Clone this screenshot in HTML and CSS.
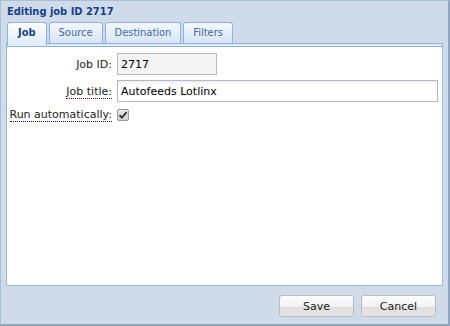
FILE: index.html
```html
<!DOCTYPE html>
<html lang="en">
<head>
  <meta charset="UTF-8" />
  <title>Editing job ID 2717</title>
  <link rel="stylesheet" href="styles.css">
</head>
<body>

  <div class="window">
    <div class="window-title">Editing job ID 2717</div>

    <div class="tab-panel">
      <div class="tab-bar">
        <div class="tab active">Job</div>
        <div class="tab">Source</div>
        <div class="tab">Destination</div>
        <div class="tab">Filters</div>
      </div>
      <div class="tab-strip"></div>

      <div class="tab-body">
        <div class="form-row">
          <label class="field-label">Job ID:</label>
          <input type="text" class="field readonly short" value="2717" readonly />
        </div>
        <div class="form-row">
          <label class="field-label"><span class="hint red">Job title:</span></label>
          <input type="text" class="field wide" value="Autofeeds Lotlinx" />
        </div>
        <div class="form-row check-row">
          <label class="field-label"><span class="hint blue">Run automatically:</span></label>
          <span class="checkbox">
            <svg width="12" height="12" viewBox="0 0 12 12">
              <path d="M2.5 6.2 L4.8 8.6 L9.6 3.2" fill="none" stroke="#333" stroke-width="1.8" />
            </svg>
          </span>
        </div>
      </div>
    </div>

    <div class="window-buttons">
      <button class="btn">Save</button>
      <button class="btn">Cancel</button>
    </div>
  </div>

</body>
</html>
```

FILE: styles.css
```css
body {
  margin: 0;
  font-family: "DejaVu Sans", Verdana, sans-serif;
}

.window {
  width: 450px;
  height: 326px;
  box-sizing: border-box;
  background: #cfdbe8;
  border: 1px solid #a9bfd6;
  border-right: 2px solid #8fa5c0;
  border-bottom: 2px solid #8fa5c0;
  display: flex;
  flex-direction: column;
}

.window-title {
  color: #15428b;
  font-family: "DejaVu Sans Condensed", "DejaVu Sans", sans-serif;
  font-stretch: condensed;
  font-weight: bold;
  font-size: 11px;
  padding: 4px 0 0 6px;
  height: 17px;
}

.tab-panel {
  margin: 0 5px 0 5px;
  display: flex;
  flex-direction: column;
}

.tab-bar {
  display: flex;
  gap: 2px;
  padding-left: 1px;
  height: 21px;
}

.tab {
  border: 1px solid #8db2e3;
  border-bottom: none;
  border-radius: 3px 3px 0 0;
  background: linear-gradient(#f3f8fe, #d7e5f7);
  color: #416aa3;
  font-family: "DejaVu Sans Condensed", "DejaVu Sans", sans-serif;
  font-stretch: condensed;
  font-size: 11px;
  line-height: 20px;
  padding: 0 9px;
}

.tab.active {
  background: linear-gradient(#ffffff, #deecfd);
  color: #15428b;
  font-weight: bold;
  padding: 0 10px;
  height: 22px;
  position: relative;
  z-index: 1;
}

.tab-strip {
  height: 2px;
  background: #deecfd;
  border: 1px solid #8db2e3;
}

.tab-body {
  background: #fff;
  border: 1px solid #99bbe8;
  border-top: none;
  height: 239px;
  padding-top: 6px;
  box-sizing: border-box;
}

.form-row {
  display: flex;
  align-items: center;
  margin-bottom: 5px;
}

.field-label {
  width: 105px;
  padding-right: 5px;
  text-align: right;
  font-size: 11px;
  color: #222;
}

.hint {
  border-bottom: 1px dotted;
}

.hint.red {
  border-color: #8b0000;
}

.hint.blue {
  border-color: #0000cc;
}

.field {
  height: 22px;
  box-sizing: border-box;
  border: 1px solid #b5b8c8;
  font-family: "DejaVu Sans", Verdana, sans-serif;
  font-size: 11px;
  padding: 0 3px;
  color: #000;
  outline: none;
}

.field.readonly {
  background: #f4f4f4;
}

.field.short {
  width: 100px;
}

.field.wide {
  width: 321px;
  background: linear-gradient(#eeeeee, #ffffff 4px);
}

.check-row {
  margin-top: 2px;
}

.checkbox {
  width: 12px;
  height: 12px;
  margin-top: 2px;
  box-sizing: border-box;
  border: 1px solid #9a9a9a;
  border-radius: 2px;
  background: linear-gradient(#e6e6e6, #d0d0d0);
  display: flex;
}

.checkbox svg {
  margin: -1px;
}

.window-buttons {
  display: flex;
  justify-content: flex-end;
  gap: 7px;
  padding: 9px 12px 0 0;
}

.btn {
  width: 75px;
  height: 22px;
  border: 1px solid #bcbcbc;
  border-radius: 3px;
  background: linear-gradient(#fdfdfd 0%, #f1f1f1 55%, #dedede 56%, #e6e6e6 100%);
  font-family: "DejaVu Sans", Verdana, sans-serif;
  font-size: 11px;
  color: #222;
  padding: 0;
}
```
